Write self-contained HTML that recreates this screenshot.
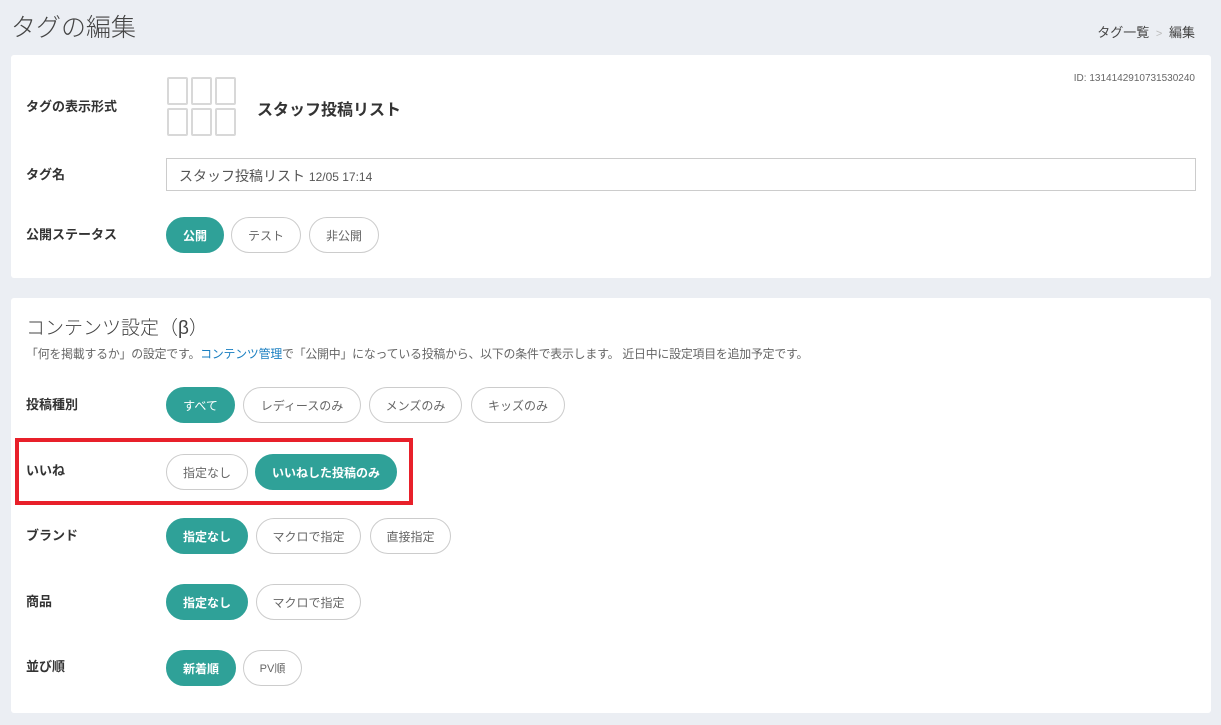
<!DOCTYPE html>
<html><head><meta charset="utf-8"><style>
*{box-sizing:border-box;margin:0;padding:0}
body{width:1221px;height:725px;background:#ebeef3;font-family:"Liberation Sans","Noto Sans CJK JP",sans-serif;position:relative;overflow:hidden;color:#333}
.a{position:absolute}
.card{position:absolute;left:11px;width:1200px;background:#fff;border-radius:3px}
.lbl{position:absolute;left:26px;font-size:13px;font-weight:bold;color:#333;line-height:16px}
.b{position:absolute;height:36px;border:1px solid #ccc;border-radius:18px;font-size:12px;color:#666;display:flex;align-items:center;justify-content:center;background:#fff}
.b.on{background:#2fa198;border-color:#2fa198;color:#fff;font-weight:bold}
.sq{position:absolute;width:21px;height:28px;border:2px solid #d8d8d8;border-radius:2px}
</style></head><body>
<div class="a" style="left:11px;top:8px;font-size:25px;font-weight:300;color:#444">タグの編集</div>
<div class="a" style="right:26px;top:22px;font-size:13px;color:#444">タグ一覧 <span style="color:#bbb;font-size:11px">&nbsp;&gt;&nbsp;</span> 編集</div>
<div class="card" style="top:55px;height:223px"></div>
<div class="a" style="right:26px;top:73px;font-size:10px;color:#666">ID: 1314142910731530240</div>
<div class="lbl" style="top:99px">タグの表示形式</div>
<div class="sq" style="left:167px;top:77px"></div><div class="sq" style="left:191px;top:77px"></div><div class="sq" style="left:215px;top:77px"></div>
<div class="sq" style="left:167px;top:108px"></div><div class="sq" style="left:191px;top:108px"></div><div class="sq" style="left:215px;top:108px"></div>
<div class="a" style="left:257px;top:96px;font-size:16px;font-weight:bold;color:#333">スタッフ投稿リスト</div>
<div class="lbl" style="top:167px">タグ名</div>
<div class="a" style="left:166px;top:158px;width:1030px;height:33px;border:1px solid #ccc;font-size:14px;color:#555;padding:7px 12px">スタッフ投稿リスト <span style="font-size:12px">12/05 17:14</span></div>
<div class="lbl" style="top:227px">公開ステータス</div>
<div class="b on" style="left:166px;top:217px;width:58px">公開</div>
<div class="b" style="left:231px;top:217px;width:70px">テスト</div>
<div class="b" style="left:309px;top:217px;width:70px">非公開</div>

<div class="card" style="top:298px;height:415px"></div>
<div class="a" style="left:26px;top:313px;font-size:19px;font-weight:300;color:#444">コンテンツ設定（β）</div>
<div class="a" style="left:26px;top:345px;font-size:11.9px;color:#666;letter-spacing:-0.2px">「何を掲載するか」の設定です。<span style="color:#1a7fc1">コンテンツ管理</span>で「公開中」になっている投稿から、以下の条件で表示します。 近日中に設定項目を追加予定です。</div>
<div class="lbl" style="top:397px">投稿種別</div>
<div class="b on" style="left:166px;top:387px;width:69px;font-weight:normal">すべて</div>
<div class="b" style="left:243px;top:387px;width:118px">レディースのみ</div>
<div class="b" style="left:369px;top:387px;width:93px">メンズのみ</div>
<div class="b" style="left:471px;top:387px;width:94px">キッズのみ</div>
<div class="a" style="left:15px;top:438px;width:398px;height:67px;border:4px solid #e8202a"></div>
<div class="lbl" style="top:463px">いいね</div>
<div class="b" style="left:166px;top:454px;width:82px">指定なし</div>
<div class="b on" style="left:255px;top:454px;width:142px">いいねした投稿のみ</div>
<div class="lbl" style="top:528px">ブランド</div>
<div class="b on" style="left:166px;top:518px;width:82px">指定なし</div>
<div class="b" style="left:256px;top:518px;width:105px">マクロで指定</div>
<div class="b" style="left:370px;top:518px;width:81px">直接指定</div>
<div class="lbl" style="top:594px">商品</div>
<div class="b on" style="left:166px;top:584px;width:82px">指定なし</div>
<div class="b" style="left:256px;top:584px;width:105px">マクロで指定</div>
<div class="lbl" style="top:659px">並び順</div>
<div class="b on" style="left:166px;top:650px;width:70px">新着順</div>
<div class="b" style="left:243px;top:650px;width:59px;font-size:11px">PV順</div>
</body></html>
